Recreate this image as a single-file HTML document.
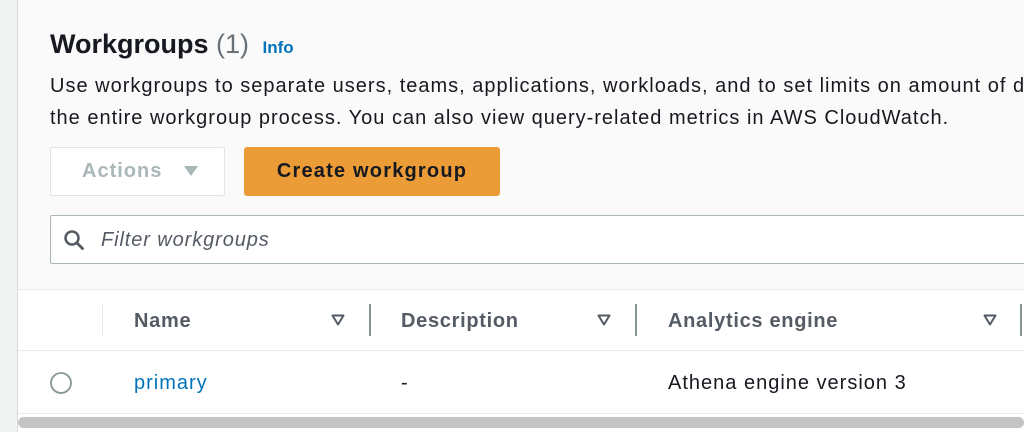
<!DOCTYPE html>
<html><head><style>
*{margin:0;padding:0;box-sizing:border-box}
body{width:1024px;height:432px;overflow:hidden;background:#fafafa;font-family:"Liberation Sans",sans-serif;color:#16191f;position:relative}
.lstrip{position:absolute;left:0;top:0;width:18px;height:432px;background:#f2f3f3;border-right:1px solid #d5dbdb}
.abs{position:absolute;white-space:nowrap}
.h{font-size:20px;font-weight:bold;color:#545b64;letter-spacing:0.7px}
.r{font-size:20px;letter-spacing:1px}
</style></head><body>
<div class="lstrip"></div>
<div class="abs" style="left:50px;top:29px;font-size:27px;font-weight:bold">Workgroups <span style="font-weight:normal;color:#687078">(1)</span> <span style="font-size:17px;color:#0073bb;margin-left:6px">Info</span></div>
<div class="abs" style="left:50px;top:70px;font-size:20px;letter-spacing:1px;line-height:32px;color:#16191f">Use workgroups to separate users, teams, applications, workloads, and to set limits on amount of data<br>the entire workgroup process. You can also view query-related metrics in AWS CloudWatch.</div>
<div class="abs" style="left:50px;top:147px;width:175px;height:49px;background:#fff;border:1px solid #e0e4e4;border-radius:2px;color:#aab7b8;font-weight:bold;font-size:20px;letter-spacing:1px;line-height:47px;padding-left:31px">Actions <svg width="16" height="12" style="margin-left:14px" viewBox="0 0 16 12"><path d="M1 1h14L8 11z" fill="#aab7b8"/></svg></div>
<div class="abs" style="left:244px;top:147px;width:256px;height:49px;background:#ec9c37;border-radius:3px;font-weight:bold;font-size:20px;letter-spacing:1.2px;line-height:49px;text-align:center">Create workgroup</div>
<div class="abs" style="left:50px;top:215px;width:990px;height:49px;background:#fff;border:1px solid #aab7b8;border-radius:2px"></div>
<svg class="abs" style="left:63px;top:229px" width="22" height="22" viewBox="0 0 22 22"><circle cx="9" cy="9" r="6.5" fill="none" stroke="#545b64" stroke-width="2.5"/><path d="M14 14l5.5 5.5" stroke="#545b64" stroke-width="2.8" stroke-linecap="round"/></svg>
<div class="abs" style="left:101px;top:229px;font-size:20px;letter-spacing:0.9px;font-style:italic;color:#545b64">Filter workgroups</div>
<div class="abs" style="left:18px;top:289px;width:1006px;height:143px;background:#fff;border-top:1px solid #eaeded"></div>
<div class="abs" style="left:18px;top:350px;width:1006px;height:1px;background:#eaeded"></div>
<div class="abs" style="left:18px;top:413px;width:1006px;height:1px;background:#eaeded"></div>
<div class="abs" style="left:102px;top:304px;width:1px;height:32px;background:#eaeded"></div>
<div class="abs" style="left:369px;top:304px;width:2px;height:32px;background:#879596"></div>
<div class="abs" style="left:635px;top:304px;width:2px;height:32px;background:#879596"></div>
<div class="abs" style="left:1020px;top:304px;width:2px;height:32px;background:#879596"></div>
<div class="abs h" style="left:134px;top:310px">Name</div>
<div class="abs h" style="left:401px;top:310px">Description</div>
<div class="abs h" style="left:668px;top:310px">Analytics engine</div>
<svg class="abs" style="left:331px;top:314px" width="14" height="12" viewBox="0 0 14 12"><path d="M1.5 1.5h11L7 10.5z" fill="none" stroke="#545b64" stroke-width="2" stroke-linejoin="round"/></svg>
<svg class="abs" style="left:597px;top:314px" width="14" height="12" viewBox="0 0 14 12"><path d="M1.5 1.5h11L7 10.5z" fill="none" stroke="#545b64" stroke-width="2" stroke-linejoin="round"/></svg>
<svg class="abs" style="left:983px;top:314px" width="14" height="12" viewBox="0 0 14 12"><path d="M1.5 1.5h11L7 10.5z" fill="none" stroke="#545b64" stroke-width="2" stroke-linejoin="round"/></svg>
<svg class="abs" style="left:49px;top:371px" width="24" height="24" viewBox="0 0 24 24"><circle cx="12" cy="12" r="10" fill="#fff" stroke="#879596" stroke-width="1.8"/></svg>
<div class="abs r" style="left:134px;top:372px;color:#0073bb">primary</div>
<div class="abs r" style="left:401px;top:372px">-</div>
<div class="abs r" style="left:668px;top:372px">Athena engine version 3</div>
<div class="abs" style="left:18px;top:417px;width:1006px;height:11px;background:#c4c4c4;border-radius:6px"></div>
</body></html>
